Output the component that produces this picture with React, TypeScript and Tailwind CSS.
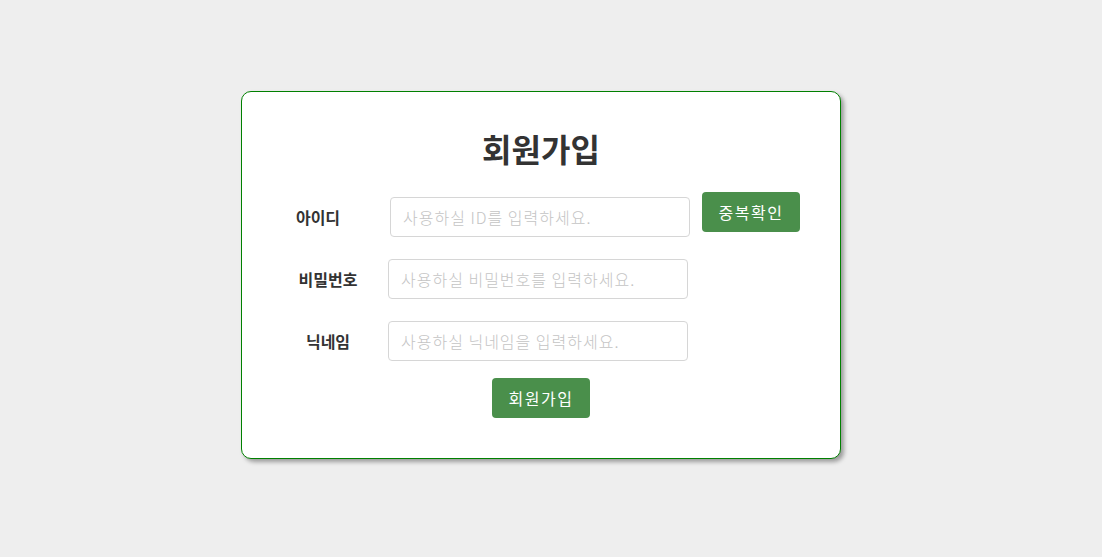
import { useState } from 'react'

const FONT = '"Noto Sans CJK KR", "Noto Sans", sans-serif'

export default function App() {
  const [id, setId] = useState('')
  const [pw, setPw] = useState('')
  const [nick, setNick] = useState('')

  const inputCls =
    'w-[300px] h-[40px] rounded-[4px] border border-[#d6d6d6] bg-white px-3 text-[16px] font-light tracking-[1px] text-[#333] placeholder:text-[#c4c4c4] outline-none'
  const btnCls =
    'h-[40px] w-[98px] rounded-[4px] bg-[#4a8f4b] text-[16px] tracking-[1.5px] text-white'
  const labelCls = 'flex h-[40px] w-[100px] items-center justify-center text-[16px] font-bold text-[#333]'

  return (
    <div className="min-h-[557px] w-full bg-[#eeeeee] pt-[91px]" style={{ fontFamily: FONT }}>
      <div className="ml-[241px] w-[600px] h-[368px] rounded-[10px] border border-[#008000] bg-white shadow-[3px_3px_4px_rgba(0,0,0,0.35)]">
        <h1 className="pt-[28px] text-center text-[32px] font-bold leading-[56px] text-[#333]">회원가입</h1>

        {/* 아이디 */}
        <div className="mt-[16px] flex items-start">
          <div className={`ml-[26px] mt-[5px] ${labelCls}`}>아이디</div>
          <input className={`ml-[22px] mt-[5px] ${inputCls}`} placeholder="사용하실 ID를 입력하세요." value={id} onChange={e => setId(e.target.value)} />
          <button className={`ml-[12px] ${btnCls}`}>중복확인</button>
        </div>

        {/* 비밀번호 */}
        <div className="mt-[22px] flex items-center">
          <div className={`ml-[36px] ${labelCls}`}>비밀번호</div>
          <input type="password" className={`ml-[10px] ${inputCls}`} placeholder="사용하실 비밀번호를 입력하세요." value={pw} onChange={e => setPw(e.target.value)} />
        </div>

        {/* 닉네임 */}
        <div className="mt-[22px] flex items-center">
          <div className={`ml-[36px] ${labelCls}`}>닉네임</div>
          <input className={`ml-[10px] ${inputCls}`} placeholder="사용하실 닉네임을 입력하세요." value={nick} onChange={e => setNick(e.target.value)} />
        </div>

        <div className="mt-[17px] flex justify-center">
          <button className={btnCls}>회원가입</button>
        </div>
      </div>
    </div>
  )
}
